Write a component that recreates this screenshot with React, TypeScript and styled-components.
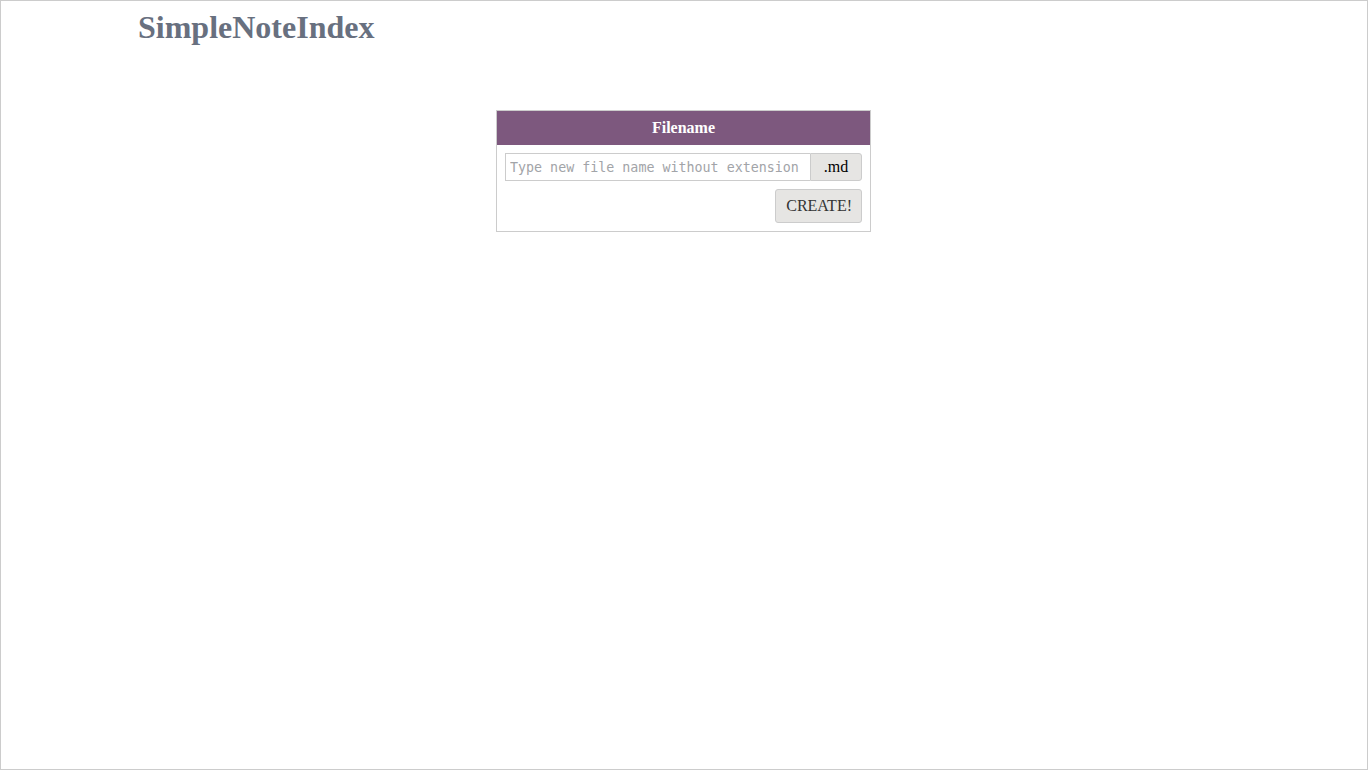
import React from "react";
import styled, { createGlobalStyle } from "styled-components";

const GlobalStyle = createGlobalStyle`
  html, body {
    margin: 0;
    padding: 0;
  }
  body {
    font-family: "Liberation Serif", "Times New Roman", serif;
    background: #ffffff;
  }
`;

const Page = styled.div`
  box-sizing: border-box;
  height: 100vh;
  border: 1px solid #cccccc;
  padding-top: 8px;
`;

const Container = styled.div`
  width: 1092px;
  margin: 0 auto;
`;

const Title = styled.h1`
  margin: 0;
  font-size: 32px;
  font-weight: bold;
  color: #68707f;
`;

const Card = styled.div`
  width: 375px;
  box-sizing: border-box;
  margin: 64px 0 0 calc(50% - 188px);
  border: 1px solid #cccccc;
`;

const CardHeader = styled.div`
  height: 34px;
  background: #7d587e;
  color: #ffffff;
  font-weight: bold;
  font-size: 16px;
  display: flex;
  align-items: center;
  justify-content: center;
`;

const CardBody = styled.div`
  padding: 8px;
  display: flex;
  flex-direction: column;
  gap: 8px;
`;

const InputGroup = styled.div`
  display: flex;
  height: 28px;
`;

const NameInput = styled.input`
  flex: 1;
  min-width: 0;
  box-sizing: border-box;
  height: 28px;
  border: 1px solid #cccccc;
  border-right: none;
  padding: 0 4px;
  font-family: "DejaVu Sans Mono", monospace;
  font-size: 13.33px;
  outline: none;
  &::placeholder {
    color: #a2a4a8;
  }
`;

const Addon = styled.span`
  box-sizing: border-box;
  width: 52px;
  height: 28px;
  display: flex;
  align-items: center;
  justify-content: center;
  background: #e6e5e3;
  border: 1px solid #cccccc;
  border-radius: 0 3px 3px 0;
  font-size: 16px;
  color: #000000;
`;

const Actions = styled.div`
  display: flex;
  justify-content: flex-end;
`;

const CreateButton = styled.button`
  box-sizing: border-box;
  height: 34px;
  padding: 0 9px 0 10px;
  background: #e6e5e3;
  border: 1px solid #cccccc;
  border-radius: 3px;
  font-family: "Liberation Serif", "Times New Roman", serif;
  font-size: 16px;
  color: #333333;
  cursor: pointer;
`;

const App: React.FC = () => {
  return (
    <>
      <GlobalStyle />
      <Page>
        <Container>
          <Title>SimpleNoteIndex</Title>
        </Container>
        <Card>
          <CardHeader>Filename</CardHeader>
          <CardBody>
            <InputGroup>
              <NameInput placeholder="Type new file name without extension" />
              <Addon>.md</Addon>
            </InputGroup>
            <Actions>
              <CreateButton>CREATE!</CreateButton>
            </Actions>
          </CardBody>
        </Card>
      </Page>
    </>
  );
};

export default App;
